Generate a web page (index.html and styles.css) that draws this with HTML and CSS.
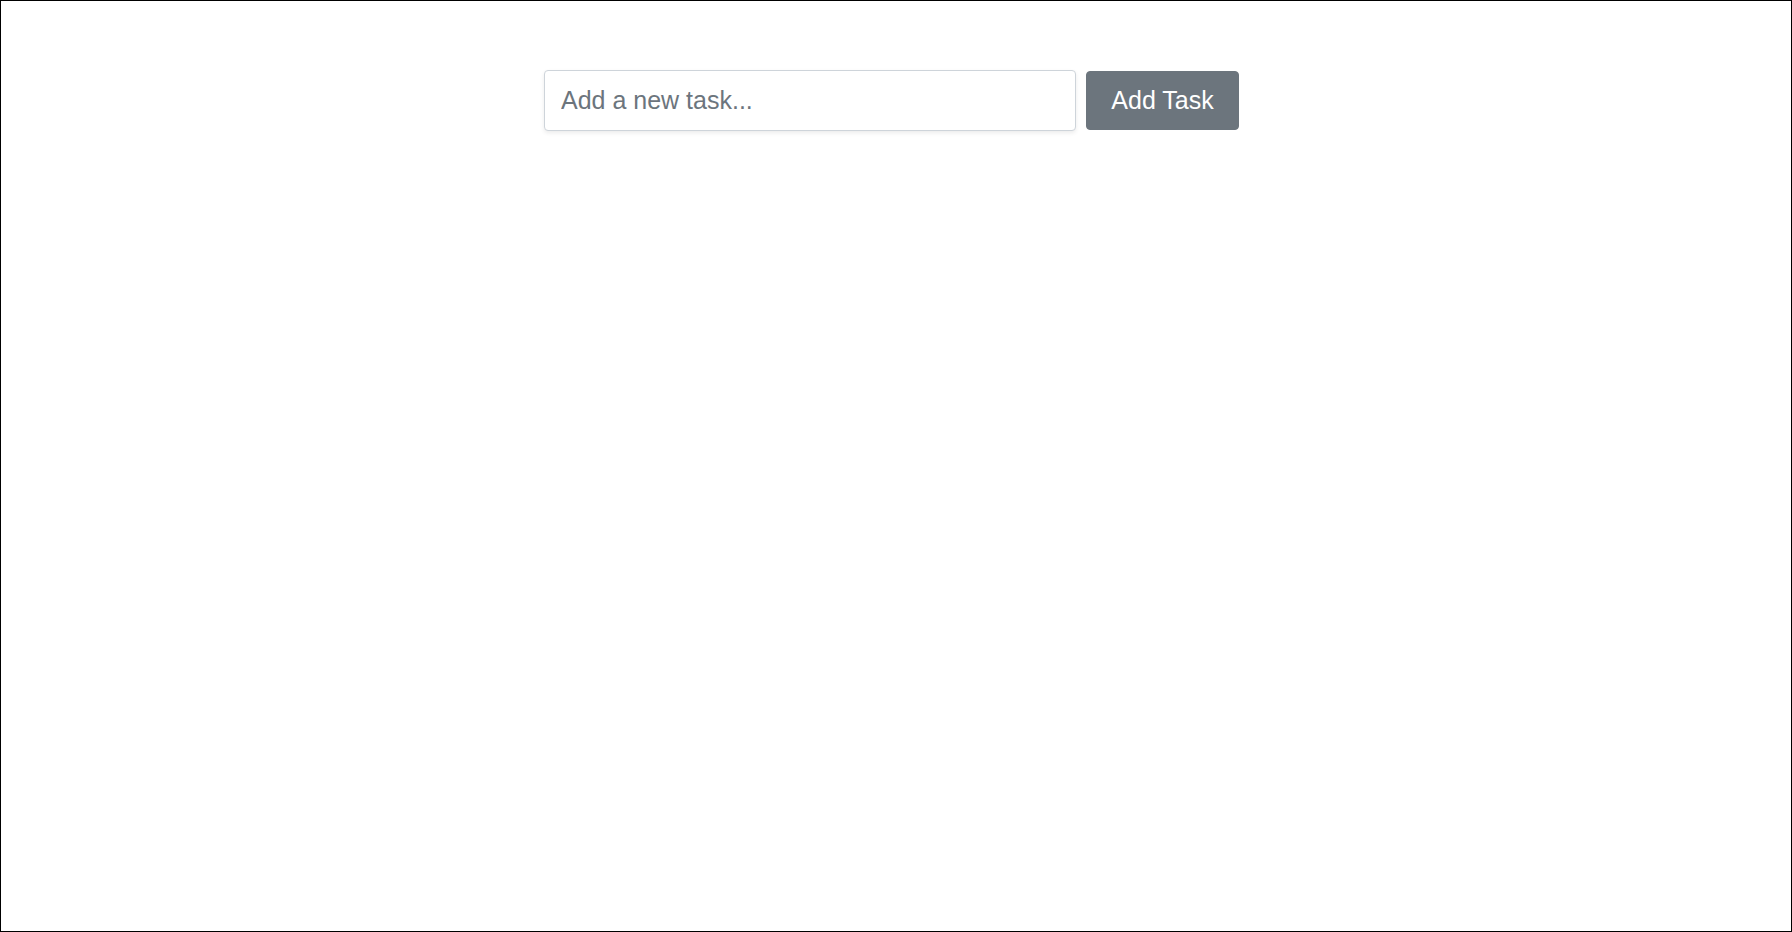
FILE: index.html
```html
<!DOCTYPE html>
<html lang="en">
<head>
<meta charset="utf-8">
<title>Tasks</title>
<link rel="stylesheet" href="styles.css">
</head>
<body>
<div class="page">
  <div class="container">
    <form class="task-form" onsubmit="return false;">
      <input class="task-input" type="text" placeholder="Add a new task...">
      <button class="task-btn" type="submit">Add Task</button>
    </form>
  </div>
</div>
</body>
</html>
```
FILE: styles.css
```css
html, body {
  margin: 0;
  padding: 0;
  height: 100%;
  background: #fff;
}
.page {
  box-sizing: border-box;
  height: 100vh;
  border: 1px solid #000;
  padding-top: 69px;
  font-family: "Liberation Sans", Arial, sans-serif;
}
.container {
  width: 704px;
  margin: 0 auto;
}
.task-form {
  display: flex;
  align-items: center;
  gap: 10px;
  margin: 0;
}
.task-input {
  box-sizing: border-box;
  width: 532px;
  height: 61px;
  padding: 0 16px;
  font-family: "Liberation Sans", Arial, sans-serif;
  font-size: 25px;
  color: #495057;
  background: #fff;
  border: 1px solid #ced4da;
  border-radius: 4px;
  box-shadow: 0 2px 4px rgba(0, 0, 0, 0.08);
  outline: none;
}
.task-input::placeholder {
  color: #6c757d;
  opacity: 1;
}
.task-btn {
  box-sizing: border-box;
  width: 153px;
  height: 59px;
  padding: 0;
  font-family: "Liberation Sans", Arial, sans-serif;
  font-size: 25px;
  color: #fff;
  background: #6c757d;
  border: 1px solid #6c757d;
  border-radius: 4px;
  cursor: pointer;
}
```
